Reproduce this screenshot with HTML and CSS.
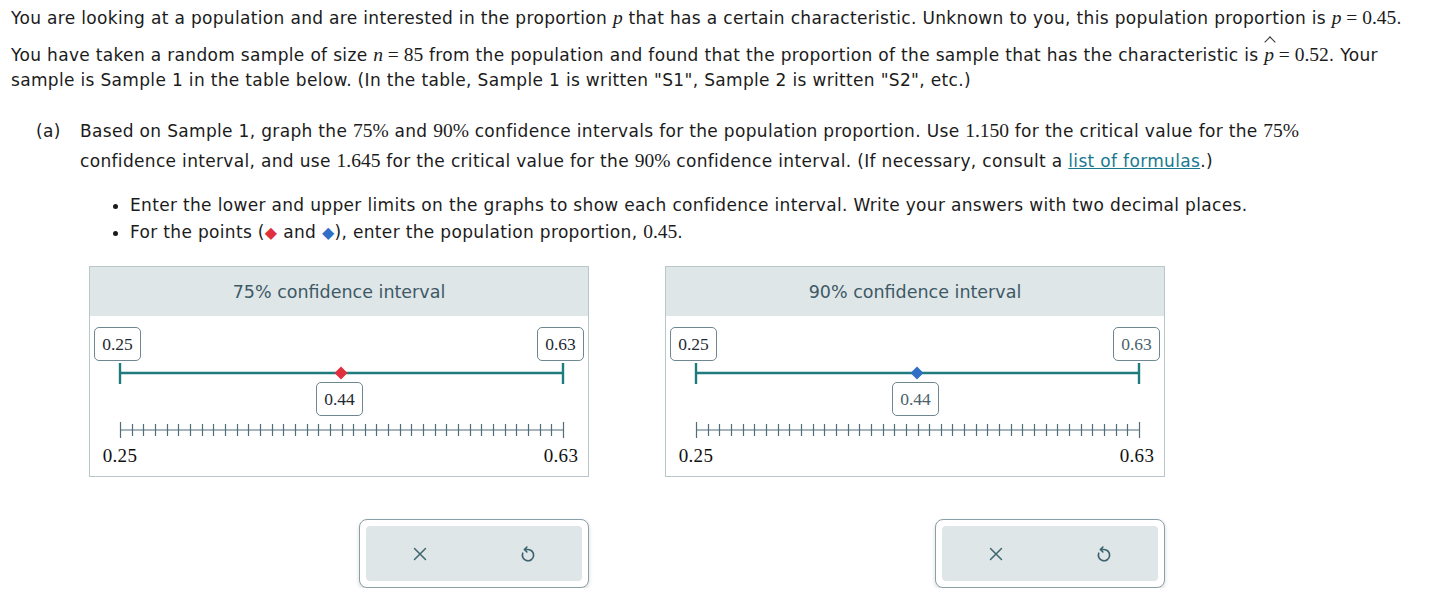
FILE: index.html
```html
<!DOCTYPE html>
<html>
<head>
<meta charset="utf-8">
<link rel="stylesheet" href="styles.css">
</head>
<body>
<div class="page">
  <p class="intro l1">You are looking at a population and are interested in the proportion <span class="m"><i>p</i></span> that has a certain characteristic. Unknown to you, this population proportion is <span class="m"><i>p</i> = 0.45</span>.</p>
  <p class="intro l2">You have taken a random sample of size <span class="m"><i>n</i> = 85</span> from the population and found that the proportion of the sample that has the characteristic is <span class="m"><span class="hat"><i>p</i></span> = 0.52</span>. Your<br>sample is Sample 1 in the table below. (In the table, Sample 1 is written "S1", Sample 2 is written "S2", etc.)</p>

  <div class="part">
    <div class="part-label">(a)</div>
    <div class="part-body">
      <p class="q">Based on Sample 1, graph the <span class="m">75%</span> and <span class="m">90%</span> confidence intervals for the population proportion. Use <span class="m">1.150</span> for the critical value for the <span class="m">75%</span><br>confidence interval, and use <span class="m">1.645</span> for the critical value for the <span class="m">90%</span> confidence interval. (If necessary, consult a <a class="link" href="#">list of formulas</a>.)</p>
      <ul class="bullets">
        <li>Enter the lower and upper limits on the graphs to show each confidence interval. Write your answers with two decimal places.</li>
        <li>For the points (<span class="dia red">&#9670;</span> and <span class="dia blue">&#9670;</span>), enter the population proportion, <span class="m">0.45</span>.</li>
      </ul>
    </div>
  </div>

  <div class="graphs">
    <div class="col">
      <div class="panel">
        <div class="panel-head">75% confidence interval</div>
        <div class="panel-body">
          <svg class="plot" width="498" height="160" viewBox="0 0 498 160">
            <g class="interval">
              <line x1="29" y1="57" x2="473" y2="57"/>
              <line x1="30" y1="47" x2="30" y2="68"/>
              <line x1="473" y1="47" x2="473" y2="68"/>
            </g>
            <polygon class="pt-red" points="251,50.5 257.5,57 251,63.5 244.5,57"/>
            <g class="axis" id="axis1"></g>
            <text class="lbl" x="30" y="146" text-anchor="middle">0.25</text>
            <text class="lbl" x="471" y="146" text-anchor="middle">0.63</text>
          </svg>
          <div class="box" style="left:4px;top:11px">0.25</div>
          <div class="box" style="left:447px;top:11px">0.63</div>
          <div class="box" style="left:226px;top:66px">0.44</div>
        </div>
      </div>
      <div class="tools">
        <div class="tools-in">
          <span class="tool"><svg width="16" height="16" viewBox="0 0 16 16"><path d="M2.5 2.5 L13.5 13.5 M13.5 2.5 L2.5 13.5"/></svg></span>
          <span class="tool"><svg width="16" height="18" viewBox="0 0 14 16"><path d="M6 1.8 L3.8 4 L6 6.2 M3.8 4 H7 A5 5 0 1 1 2.3 7.3"/></svg></span>
        </div>
      </div>
    </div>

    <div class="col">
      <div class="panel">
        <div class="panel-head">90% confidence interval</div>
        <div class="panel-body">
          <svg class="plot" width="498" height="160" viewBox="0 0 498 160">
            <g class="interval">
              <line x1="29" y1="57" x2="473" y2="57"/>
              <line x1="30" y1="47" x2="30" y2="68"/>
              <line x1="473" y1="47" x2="473" y2="68"/>
            </g>
            <polygon class="pt-blue" points="251,50.5 257.5,57 251,63.5 244.5,57"/>
            <g class="axis" id="axis2"></g>
            <text class="lbl" x="30" y="146" text-anchor="middle">0.25</text>
            <text class="lbl" x="471" y="146" text-anchor="middle">0.63</text>
          </svg>
          <div class="box" style="left:4px;top:11px">0.25</div>
          <div class="box grey" style="left:447px;top:11px">0.63</div>
          <div class="box grey" style="left:226px;top:66px">0.44</div>
        </div>
      </div>
      <div class="tools">
        <div class="tools-in">
          <span class="tool"><svg width="16" height="16" viewBox="0 0 16 16"><path d="M2.5 2.5 L13.5 13.5 M13.5 2.5 L2.5 13.5"/></svg></span>
          <span class="tool"><svg width="16" height="18" viewBox="0 0 14 16"><path d="M6 1.8 L3.8 4 L6 6.2 M3.8 4 H7 A5 5 0 1 1 2.3 7.3"/></svg></span>
        </div>
      </div>
    </div>
  </div>
</div>
<script src="script.js"></script>
</body>
</html>
```

FILE: script.js
```js
["axis1", "axis2"].forEach(function (id) {
  var g = document.getElementById(id);
  var ns = "http://www.w3.org/2000/svg";
  var x0 = 30, x1 = 473, y = 114;
  var base = document.createElementNS(ns, "line");
  base.setAttribute("x1", x0); base.setAttribute("x2", x1);
  base.setAttribute("y1", y); base.setAttribute("y2", y);
  g.appendChild(base);
  for (var i = 0; i <= 38; i++) {
    var x = Math.round(x0 + i * (x1 - x0) / 38) + 0.5;
    var t = document.createElementNS(ns, "line");
    t.setAttribute("x1", x); t.setAttribute("x2", x);
    t.setAttribute("y1", (i === 0 || i === 38) ? y - 8 : y - 6);
    t.setAttribute("y2", (i === 0 || i === 38) ? y + 8 : y + 6);
    g.appendChild(t);
  }
});
```

FILE: styles.css
```css
html, body {
  margin: 0;
  padding: 0;
  background: #fff;
}
.page {
  padding: 6px 0 0 11px;
  font-family: "DejaVu Sans", sans-serif;
  font-size: 17px;
  letter-spacing: 0.33px;
  color: #1b1b1b;
}
.intro {
  margin: 0;
  white-space: nowrap;
  line-height: 25px;
}
.l1 { margin-bottom: 12px; }
.m {
  font-family: "Liberation Serif", serif;
  font-size: 19.5px;
  letter-spacing: 0;
  line-height: 1;
}
.m i { font-style: italic; }
.hat {
  position: relative;
  display: inline-block;
}
.hat::before {
  content: "";
  position: absolute;
  left: 2px;
  top: -7px;
  width: 7px;
  height: 7px;
  border-left: 1.3px solid #333;
  border-top: 1.3px solid #333;
  transform: rotate(45deg);
}
.part {
  display: flex;
  margin: 23px 0 0 25px;
}
.part-label {
  width: 44px;
  line-height: 30px;
}
.q {
  margin: 0;
  white-space: nowrap;
  line-height: 30px;
}
.link {
  color: #19798f;
  text-decoration: underline;
}
.bullets {
  margin: 16px 0 0 0;
  padding-left: 50px;
  line-height: 27px;
  white-space: nowrap;
}
.dia { font-size: 16px; }
.dia.red { color: #e0303d; }
.dia.blue { color: #2f6fc6; }

.graphs {
  display: flex;
  gap: 76px;
  margin: 20px 0 0 78px;
}
.col {
  display: flex;
  flex-direction: column;
  align-items: flex-end;
  gap: 42px;
}
.panel {
  width: 500px;
  box-sizing: border-box;
  border: 1px solid #b9c6ca;
}
.panel-head {
  height: 49px;
  background: #dfe6e8;
  color: #3d5965;
  font-size: 17.5px;
  letter-spacing: 0;
  display: flex;
  align-items: center;
  justify-content: center;
}
.panel-body {
  position: relative;
  height: 160px;
}
.plot { display: block; }
.interval line {
  stroke: #1f7b7d;
  stroke-width: 2.4;
}
.pt-red { fill: #e0303d; }
.pt-blue { fill: #2f6fc6; }
.axis line {
  stroke: #4e6d78;
  stroke-width: 1.2;
}
.lbl {
  font-family: "Liberation Serif", serif;
  font-size: 19px;
  fill: #111;
}
.box {
  position: absolute;
  width: 47px;
  height: 34px;
  box-sizing: border-box;
  border: 1.3px solid #6e8791;
  border-radius: 5px;
  background: #fff;
  font-family: "Liberation Serif", serif;
  font-size: 17.5px;
  letter-spacing: 0;
  color: #1e2a30;
  display: flex;
  align-items: center;
  justify-content: center;
}
.box.grey { color: #4a626c; }
.tools {
  width: 230px;
  height: 69px;
  box-sizing: border-box;
  border: 1px solid #8aa0a6;
  border-radius: 8px;
  padding: 6px;
  background: #fff;
  box-shadow: 0 2px 4px rgba(0, 0, 0, 0.15);
}
.tools-in {
  height: 100%;
  background: #dfe6e8;
  border-radius: 4px;
  display: flex;
}
.tool {
  flex: 1;
  display: flex;
  align-items: center;
  justify-content: center;
}
.tool svg path {
  fill: none;
  stroke: #3d6470;
  stroke-width: 1.5;
  stroke-linecap: round;
  stroke-linejoin: round;
}
```
